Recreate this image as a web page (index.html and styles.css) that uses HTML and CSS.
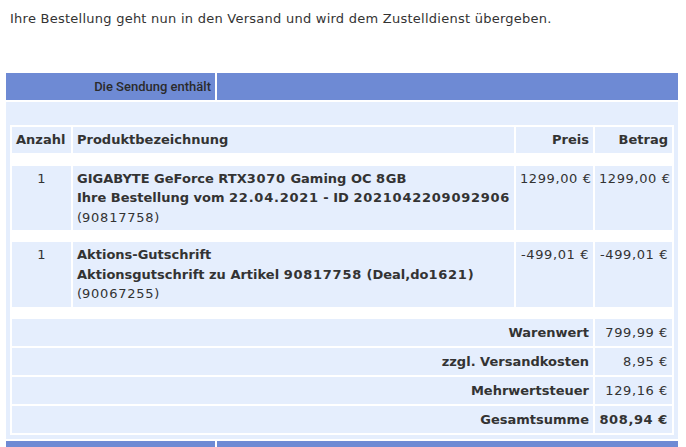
FILE: index.html
```html
<!DOCTYPE html>
<html lang="de">
<head>
<meta charset="utf-8">
<title>Versand</title>
<link rel="stylesheet" href="styles.css">
</head>
<body>
<p class="intro">Ihre Bestellung geht nun in den Versand und wird dem Zustelldienst übergeben.</p>
<div class="shipment">
  <div class="ship-bar">
    <div class="ship-title">Die Sendung enthält</div>
    <div class="ship-fill"></div>
  </div>
  <div class="ship-body">
    <table class="items">
      <colgroup>
        <col class="c-qty">
        <col class="c-name">
        <col class="c-price">
        <col class="c-sum">
      </colgroup>
      <tr class="head">
        <td>Anzahl</td>
        <td>Produktbezeichnung</td>
        <td class="num">Preis</td>
        <td class="num">Betrag</td>
      </tr>
      <tr class="gap first"><td colspan="4"></td></tr>
      <tr class="item">
        <td class="qty">1</td>
        <td><b>GIGABYTE GeForce RTX<span class="d">3070</span> Gaming OC <span class="d">8</span>GB</b><br><b>Ihre Bestellung vom <span class="d">22.04.2021</span> - ID <span class="d">2021042209092906</span></b><br>(<span class="d">90817758</span>)</td>
        <td class="num">1299,00 €</td>
        <td class="num">1299,00 €</td>
      </tr>
      <tr class="gap"><td colspan="4"></td></tr>
      <tr class="item">
        <td class="qty">1</td>
        <td><b>Aktions-Gutschrift</b><br><b>Aktionsgutschrift zu Artikel <span class="d">90817758</span> (Deal,do<span class="d">1621</span>)</b><br>(<span class="d">90067255</span>)</td>
        <td class="num">-499,01 €</td>
        <td class="num">-499,01 €</td>
      </tr>
      <tr class="gap"><td colspan="4"></td></tr>
      <tr class="total">
        <td colspan="3" class="label">Warenwert</td>
        <td class="num">799,99 €</td>
      </tr>
      <tr class="total">
        <td colspan="3" class="label">zzgl. Versandkosten</td>
        <td class="num">8,95 €</td>
      </tr>
      <tr class="total">
        <td colspan="3" class="label">Mehrwertsteuer</td>
        <td class="num">129,16 €</td>
      </tr>
      <tr class="total">
        <td colspan="3" class="label">Gesamtsumme</td>
        <td class="num strong">808,94 €</td>
      </tr>
    </table>
  </div>
  <div class="ship-bar">
    <div class="ship-title"></div>
    <div class="ship-fill"></div>
  </div>
</div>
</body>
</html>
```
FILE: styles.css
```css
html, body {
  margin: 0;
  padding: 0;
  background: #ffffff;
}
body {
  font-family: "DejaVu Sans", Verdana, sans-serif;
  font-size: 13px;
  color: #333333;
}
.intro {
  margin: 0;
  padding: 9px 0 0 10px;
  line-height: 19.5px;
  letter-spacing: 0.25px;
}
.shipment {
  margin: 44px 0 0 6px;
  width: 672px;
  display: flex;
  flex-direction: column;
  gap: 2px;
}
.ship-bar {
  display: flex;
  gap: 2px;
  height: 27px;
}
.ship-title {
  width: 209px;
  background: #6e8ad4;
  color: #2b2b2b;
  font-family: Roboto, "Liberation Sans", sans-serif;
  font-weight: 500;
  font-size: 13px;
  line-height: 27px;
  text-align: right;
  padding-right: 4px;
  box-sizing: border-box;
}
.ship-fill {
  flex: 1;
  background: #6e8ad4;
}
.ship-body {
  background: #e5eefd;
  padding: 23px 4px 4px 4px;
}
.items {
  width: 664px;
  table-layout: fixed;
  border-collapse: separate;
  border-spacing: 2px;
  background: #ffffff;
}
.c-qty { width: 59px; }
.c-name { width: 441px; }
.c-price { width: 77px; }
.c-sum { width: 77px; }
.items td {
  background: #e5eefd;
  padding: 3px 4px 3px 4px;
  line-height: 19.5px;
  vertical-align: top;
  white-space: nowrap;
  overflow: hidden;
}
.items .head td {
  font-weight: 700;
  line-height: 20px;
}
.items .gap td {
  background: #ffffff;
  height: 8px;
  padding: 0;
  line-height: 0;
}
.items .gap.first td {
  height: 9px;
}
.items td.qty {
  text-align: center;
}
.items td.num {
  text-align: right;
}
.items .item td.num,
.items .total td.num {
  letter-spacing: 0.6px;
}
.items .d {
  letter-spacing: 0.75px;
}
.items .total td {
  padding: 4px 4px;
  line-height: 19px;
}
.items .total td.label {
  font-weight: 700;
  text-align: right;
}
.items td.strong {
  font-weight: 700;
}
```
